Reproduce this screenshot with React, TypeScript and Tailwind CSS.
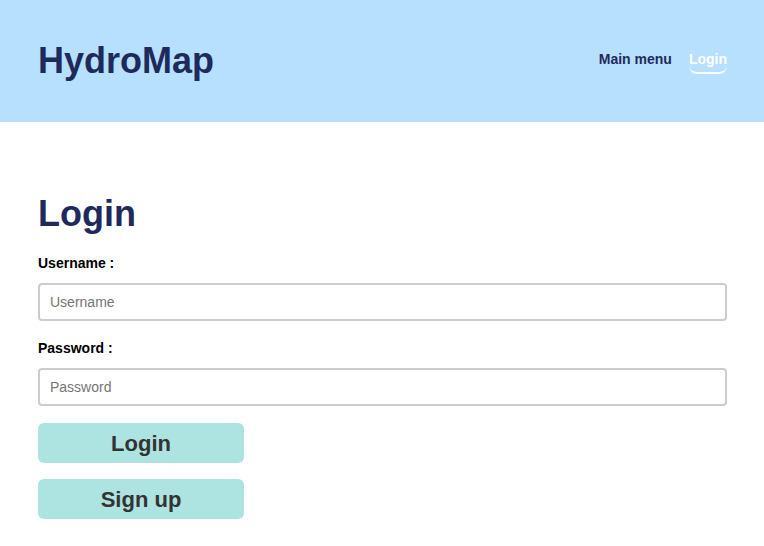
import React from 'react'

export default function App() {
  return (
    <div className="min-h-screen bg-white font-['Liberation_Sans',Arial,sans-serif]">
      {/* header */}
      <header className="flex h-[122px] items-center justify-between bg-[#b6e0fe] pl-[38px] pr-[37px]">
        <h1 className="text-[36px] leading-none font-bold text-[#1f2a5c]">HydroMap</h1>
        <nav className="flex items-center gap-[17px] text-[14px] font-bold">
          <a className="pb-[2px] text-[#1f2a5c] border-b-2 border-transparent">Main menu</a>
          <a className="pb-[2px] text-white border-b-2 border-white rounded-lg">Login</a>
        </nav>
      </header>

      <main className="pl-[38px] pr-[37px] pt-[71px]">
        <h2 className="text-[36px] leading-[41px] font-bold text-[#1f2a5c]">Login</h2>

        <form className="mt-[21px] flex flex-col">
          <label className="text-[14px] leading-4 font-bold text-black">Username :</label>
          <input
            type="text"
            placeholder="Username"
            className="mt-[12px] h-[38px] w-full rounded-[4px] border-2 border-[#cccccc] px-[10px] text-[14px] placeholder:text-[#757575] outline-none"
          />

          <label className="mt-[19px] text-[14px] leading-4 font-bold text-black">Password :</label>
          <input
            type="password"
            placeholder="Password"
            className="mt-[12px] h-[38px] w-full rounded-[4px] border-2 border-[#cccccc] px-[10px] text-[14px] placeholder:text-[#757575] outline-none"
          />

          <button
            type="button"
            className="mt-[17px] h-[40px] w-[206px] rounded-[6px] bg-[#ade3e1] text-[22px] font-bold text-[#333333]"
          >
            Login
          </button>
          <button
            type="button"
            className="mt-[16px] h-[40px] w-[206px] rounded-[6px] bg-[#ade3e1] text-[22px] font-bold text-[#333333]"
          >
            Sign up
          </button>
        </form>
      </main>
    </div>
  )
}
